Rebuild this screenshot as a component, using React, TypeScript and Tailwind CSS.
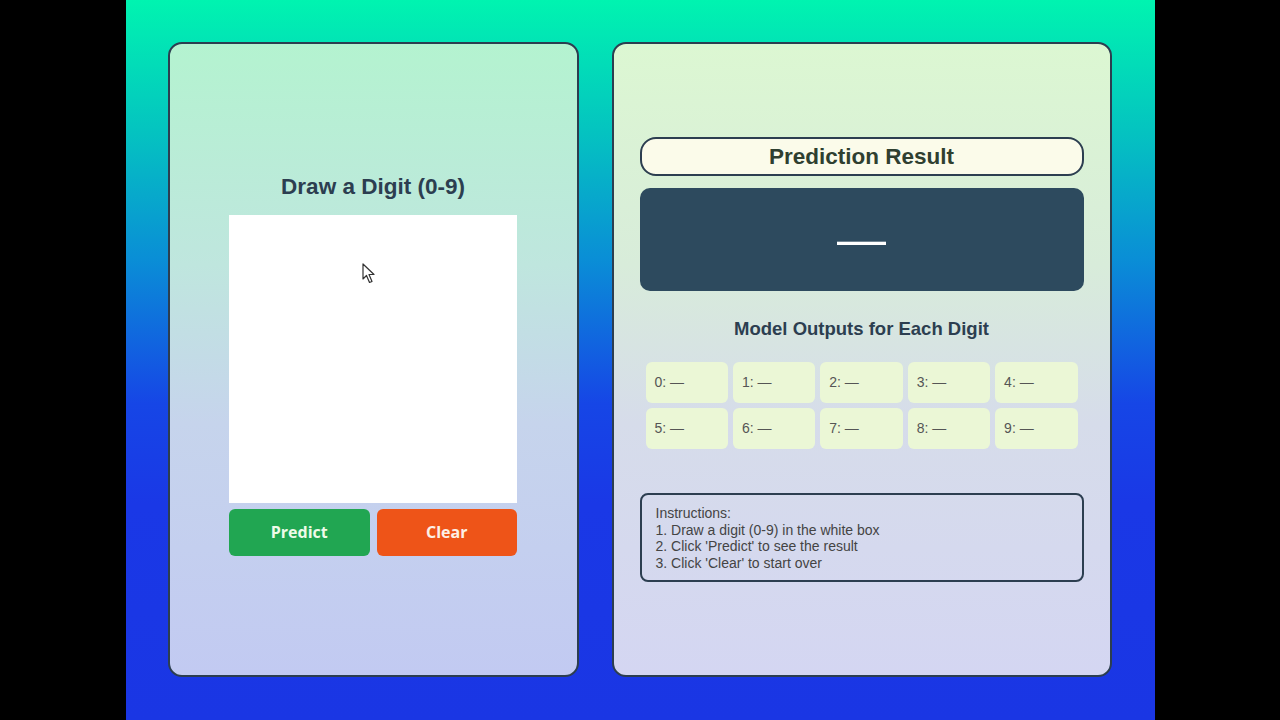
import React from 'react';

const digits = [0, 1, 2, 3, 4, 5, 6, 7, 8, 9];

export default function App() {
    return (
        <div className="w-full h-[720px] bg-black flex justify-center font-['Liberation_Sans',Arial,sans-serif]">
            <div className="w-[1029px] h-full bg-[linear-gradient(180deg,#00f4b0_0%,#04c4c0_18%,#0a8ed6_36%,#1646e6_56%,#1a38e6_70%,#1a36e4_100%)] flex gap-[33px] pl-[42px] pr-[43px] pt-[42px] pb-[43px]">
                {/* Drawing panel */}
                <div className="w-[411px] h-full rounded-[14px] border-2 border-[#2c3e50] bg-[linear-gradient(180deg,#b4f3d0_0%,#bfe6de_35%,#c6d4ec_60%,#c2caf2_100%)] flex flex-col items-center justify-center pt-[7px]">
                    <h2 className="text-[22.5px] font-bold text-[#2c3e50] mb-[11px]">Draw a Digit (0-9)</h2>
                    <div className="relative w-[288px] h-[288px] bg-white">
                        <svg className="absolute left-[133px] top-[48px]" width="16" height="22" viewBox="0 0 16 22">
                            <path d="M1 1 L1 16 L4.5 12.5 L7.5 19.5 L10 18.5 L7 11.5 L12 11.5 Z" fill="white" stroke="#333" strokeWidth="1.2" strokeLinejoin="round" />
                        </svg>
                    </div>
                    <div className="flex gap-[7px] mt-[6px] w-[288px]">
                        <button className="flex-1 h-[47px] rounded-[6px] bg-[#21a652] text-[#eefbe8] font-bold text-[16px] font-['Open_Sans',sans-serif]">
                            Predict
                        </button>
                        <button className="flex-1 h-[47px] rounded-[6px] bg-[#ee5418] text-[#fdf0e6] font-bold text-[16px] font-['Open_Sans',sans-serif]">
                            Clear
                        </button>
                    </div>
                </div>

                {/* Result panel */}
                <div className="w-[500px] h-full rounded-[14px] border-2 border-[#2c3e50] bg-[linear-gradient(180deg,#dcf7d2_0%,#d8ecda_35%,#d6dcea_60%,#d4d6f2_100%)] flex flex-col justify-center px-[26px]">
                    <div className="h-[39px] rounded-[16px] border-2 border-[#2c3e50] bg-[#fbfbea] flex items-center justify-center">
                        <h2 className="text-[22.5px] font-bold text-[#2f3f30]">Prediction Result</h2>
                    </div>
                    <div className="h-[103px] mt-[12px] rounded-[10px] bg-[#2d4a5e] flex items-center justify-center">
                        <span className="text-[49px] leading-none text-white">—</span>
                    </div>
                    <h3 className="mt-[24px] text-center text-[18.5px] leading-[27px] font-bold text-[#2c3e50]">Model Outputs for Each Digit</h3>
                    <div className="mt-[20px] px-[6px] grid grid-cols-5 gap-[5px]">
                        {digits.map((d) => (
                            <div key={d} className="h-[41px] rounded-[6px] bg-[#ebf7d6] flex items-center pl-[9px] text-[14px] text-[#555]">
                                {d}: —
                            </div>
                        ))}
                    </div>
                    <div className="mt-[44px] h-[89px] rounded-[8px] border-2 border-[#2c3e50] px-[14px] pt-[10px] text-[14px] leading-[16.5px] text-[#444]">
                        <p>Instructions:</p>
                        <p>1. Draw a digit (0-9) in the white box</p>
                        <p>2. Click 'Predict' to see the result</p>
                        <p>3. Click 'Clear' to start over</p>
                    </div>
                </div>
            </div>
        </div>
    );
}
